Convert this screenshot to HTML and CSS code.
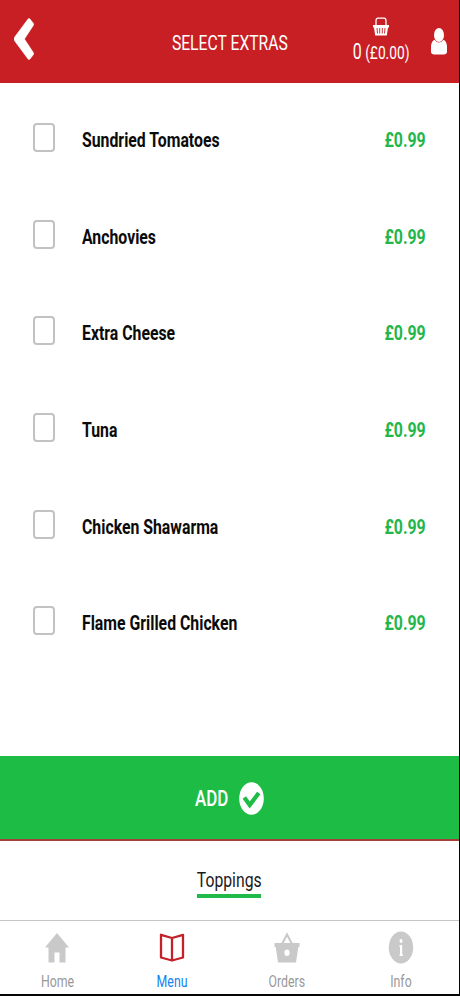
FILE: index.html
```html
<!DOCTYPE html>
<html lang="en">
<head>
<meta charset="utf-8">
<title>Select Extras</title>
<link rel="stylesheet" href="styles.css">
</head>
<body>
<div class="app">
  <header class="header">
    <svg class="back" viewBox="0 0 20 42" width="20" height="42"><path d="M14.200 .8Q15 0 16 1L19.500 5.500Q20 6.300 19.500 7.200L10.500 21 19.500 34.800Q20 35.700 19.500 36.500L16 41Q15 42 14.200 41.200L.3 22.500Q-.3 21 .3 19.500Z" fill="#fff" stroke="#fff" stroke-width=".5"/></svg>
    <h1 class="title"><span class="t center">SELECT EXTRAS</span></h1>
    <div class="cart">
      <svg viewBox="0 0 16 20" width="16" height="20"><path d="M3 8V4Q3 1.200 5 1.200H11Q13 1.200 13 4V8" fill="none" stroke="#fff" stroke-width="1.300"/><path d="M0 8H16V10.500H15L13.800 18.500H2.200L1 10.500H0Z" fill="#fff"/><path d="M4 11 4.500 16.500M6.700 11V16.500M9.300 11V16.500M12 11 11.500 16.500" stroke="#c81f25" stroke-width=".9"/></svg>
      <span class="t center cart-text"><span class="count">0</span> (£0.00)</span>
    </div>
    <svg class="user" viewBox="0 0 16 27" width="16" height="27"><ellipse cx="8" cy="7" rx="5" ry="7" fill="#fff"/><path d="M3.500 11.800Q5.500 14.500 8 14.500T12.500 11.800Q16.300 13 16.300 22.500 16.300 26.500 13 26.500H3Q-.3 26.500 -.3 22.500-.3 13 3.500 11.800Z" fill="#fff"/></svg>
  </header>
  <ul class="extras">
    <li><i class="box"></i><span class="t name">Sundried Tomatoes</span><span class="t price">£0.99</span></li>
    <li><i class="box"></i><span class="t name">Anchovies</span><span class="t price">£0.99</span></li>
    <li><i class="box"></i><span class="t name">Extra Cheese</span><span class="t price">£0.99</span></li>
    <li><i class="box"></i><span class="t name">Tuna</span><span class="t price">£0.99</span></li>
    <li><i class="box"></i><span class="t name">Chicken Shawarma</span><span class="t price">£0.99</span></li>
    <li><i class="box"></i><span class="t name">Flame Grilled Chicken</span><span class="t price">£0.99</span></li>
  </ul>
  <div class="add">
    <span class="t right add-text">ADD</span>
    <svg viewBox="0 0 25 33" width="25" height="33"><ellipse cx="12.500" cy="16.500" rx="12.300" ry="16.300" fill="#fff"/><path d="M5.300 15.500 10.700 23 19.800 11" fill="none" stroke="#1dbc45" stroke-width="4.200"/></svg>
  </div>
  <div class="section"><span class="underline"><span class="t center">Toppings</span></span></div>
  <nav class="tabs">
    <a><svg viewBox="0 0 24 34" width="24" height="34"><path d="M12 2 24 16.500H20.500V31.500H14.500V21.500H9.500V31.500H3.500V16.500H0Z" fill="#c9c9c9"/></svg><span class="t center">Home</span></a>
    <a class="active"><svg viewBox="0 0 26 34" width="26" height="34"><path d="M13 7 2 3.800V26.500L13 29.500 24 26.500V3.800ZM13 7V29.500" fill="none" stroke="#c32029" stroke-width="2.300" stroke-linejoin="round"/></svg><span class="t center">Menu</span></a>
    <a><svg viewBox="0 0 26 34" width="26" height="34"><path d="M8 13 13 3.500 18 13" fill="none" stroke="#c9c9c9" stroke-width="2"/><path d="M0.500 12H25.500V16H24.300L22 31.500H4L1.700 16H0.500Z" fill="#c9c9c9"/><ellipse cx="13" cy="21.700" rx="2.600" ry="3.200" fill="#fff"/></svg><span class="t center">Orders</span></a>
    <a><svg viewBox="0 0 26 34" width="26" height="34"><ellipse cx="13" cy="16.500" rx="12.200" ry="16" fill="#c9c9c9"/><ellipse cx="13" cy="10" rx="1.500" ry="2" fill="#fff"/><path d="M11.500 14H14.200V23.500H15V25H11.500V23.500H12V16H11.500Z" fill="#fff"/></svg><span class="t center">Info</span></a>
  </nav>
</div>
</body>
</html>
```
FILE: styles.css
```css
* { box-sizing: border-box; }
body { margin: 0; background: #050505; font-family: Roboto, sans-serif; }
.app { width: 458.500px; height: 994px; background: #fff; display: flex; flex-direction: column; overflow: hidden; }
.t { display: inline-block; white-space: nowrap; transform: scaleX(.77); transform-origin: left center; }
.center { transform-origin: center; }
.right { transform-origin: right center; }
svg { display: block; flex: none; }

.header { height: 83px; flex: none; background: #c81f25; color: #fff; display: grid; grid-template-columns: 80px 1fr 80px 35px; }
.back { margin: 18px 0 0 14px; }
.title { margin: 31px 0 0 35.500px; font-size: 20px; line-height: 24px; font-weight: 400; width: 228px; text-align: center; }
.title .t { transform: scaleX(.785); }
.cart { display: flex; flex-direction: column; align-items: center; padding-top: 17px; margin-left: -5px; }
.cart-text { margin-top: 3px; font-size: 19px; line-height: 24px; transform: scaleX(.725); }
.count { font-size: 22px; }
.user { margin: 28px 0 0 7px; }

.extras { list-style: none; margin: 0; padding: 7px 33px 0; height: 673px; flex: none; }
.extras li { height: 96.600px; display: flex; align-items: center; font-size: 21px; font-weight: 700; line-height: 26px; padding-top: 4px; }
.box { width: 21.500px; height: 29px; border: 2px solid #c2c2c2; border-radius: 4px; margin-bottom: 5px; flex: none; }
.name { margin-left: 27.500px; color: #0b0b0b; transform: scaleX(.753); }
.price { margin-left: auto; transform-origin: right center; color: #23b64a; transform: scaleX(.755); }

.add { height: 85px; flex: none; background: #1dbc45; border-bottom: 2px solid #a5403a; padding-top: 1px; display: grid; grid-template-columns: 228px 1fr; column-gap: 11px; align-items: center; color: #fff; }
.add-text { justify-self: end; font-size: 22px; font-weight: 500; }
.section { height: 79px; flex: none; display: flex; justify-content: center; padding-top: 26px; color: #1a1a1a; }
.underline { width: 64px; height: 31px; border-bottom: 4px solid #20ba48; display: flex; justify-content: center; font-size: 21px; line-height: 27px; }
.underline .t { transform: scaleX(.75); }
.tabs { flex: 1; border-top: 1px solid #c6c6c6; display: grid; grid-template-columns: repeat(4, 1fr); color: #999; font-size: 16px; line-height: 20px; }
.tabs a { display: flex; flex-direction: column; align-items: center; padding-top: 10px; gap: 7px; }
.tabs .active { color: #1482ee; }
```
